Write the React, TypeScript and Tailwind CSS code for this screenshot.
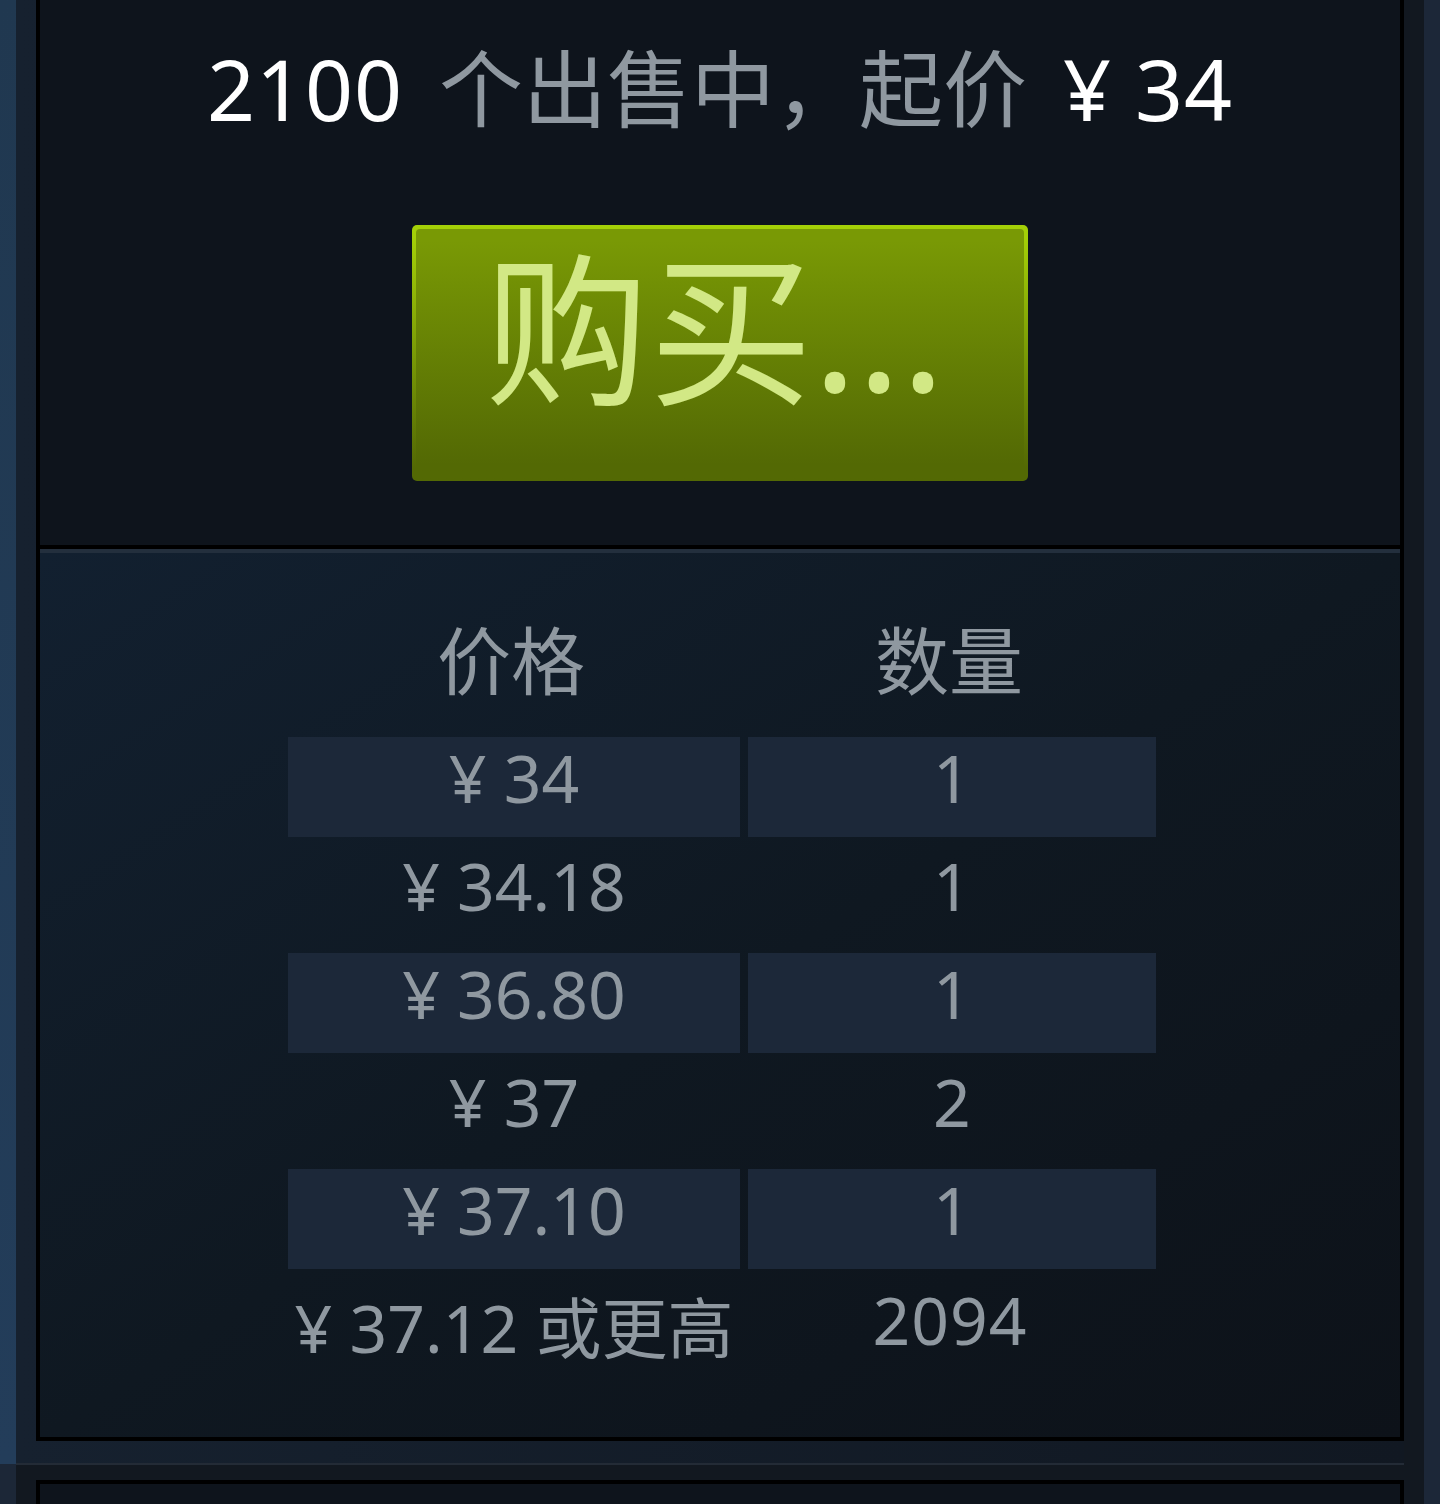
import React from 'react';

type Row = { price: string; qty: string };

const rows: Row[] = [
    { price: '¥ 34', qty: '1' },
    { price: '¥ 34.18', qty: '1' },
    { price: '¥ 36.80', qty: '1' },
    { price: '¥ 37', qty: '2' },
    { price: '¥ 37.10', qty: '1' },
];

const App: React.FC = () => {
    return (
        <div className="w-[1440px] h-[1504px] flex overflow-hidden bg-[#121820] font-['Noto_Sans','Noto_Sans_CJK_SC',sans-serif]">
            {/* left page strip */}
            <div className="w-[16px] flex flex-col">
                <div className="h-[1464px] bg-gradient-to-b from-[#203850] to-[#233d5a]" />
                <div className="flex-1 bg-[#1c2737]" />
            </div>

            {/* middle column */}
            <div className="w-[1388px] flex flex-col">
                <div className="h-[1463px] bg-gradient-to-r from-[#16212f] to-[#111822] pl-[20px]">
                    <div className="border-x-4 border-b-4 border-black">
                        {/* header promo */}
                        <div className="h-[545px] bg-[#0e141c] flex flex-col items-center pt-[47px]">
                            <div className="text-[84px] leading-none h-[84px] whitespace-nowrap flex">
                                <span className="text-white tracking-[1px]">2100</span>
                                <span className="text-[#8f98a0] ml-[36px]">个出售中，起价</span>
                                <span className="text-white ml-[36px] tracking-[1px]">¥ 34</span>
                            </div>
                            <button className="mt-[94px] w-[616px] h-[256px] p-[4px] rounded-[5px] bg-gradient-to-b from-[#a4d007] from-5% to-[#536904] to-95%">
                                <span className="w-full h-full flex justify-center items-start pt-[18px] pr-[10px] rounded-[4px] bg-gradient-to-b from-[#799905] from-5% to-[#536904] to-95% text-[#d2e885] text-[164px] leading-none">
                                    购买...
                                </span>
                            </button>
                        </div>
                        <div className="h-[4px] bg-black" />
                        <div className="h-[4px] bg-[#232f3d]" />

                        {/* order table */}
                        <div className="h-[884px] bg-gradient-to-br from-[#122030] via-[#0f1821] to-[#0d1219] pt-[63px]">
                            <table className="ml-[240px] border-separate border-spacing-[8px] text-[#8f98a0]">
                                <thead>
                                    <tr>
                                        <th className="w-[452px] font-normal text-[74px] leading-none pb-[31px] pt-0 pr-[6px] align-bottom">价格</th>
                                        <th className="w-[408px] font-normal text-[74px] leading-none pb-[31px] pt-0 pr-[6px] align-bottom">数量</th>
                                    </tr>
                                </thead>
                                <tbody>
                                    {rows.map((r, i) => (
                                        <tr key={i}>
                                            <td className={`h-[100px] text-center align-middle text-[66px] leading-none pb-[20px] whitespace-nowrap ${i % 2 === 0 ? 'bg-[#1c2839]' : ''}`}>
                                                {r.price}
                                            </td>
                                            <td className={`h-[100px] text-center align-middle text-[66px] leading-none pb-[20px] ${i % 2 === 0 ? 'bg-[#1c2839]' : ''}`}>
                                                {r.qty}
                                            </td>
                                        </tr>
                                    ))}
                                    <tr>
                                        <td className="h-[100px] text-center align-top text-[66px] leading-none pt-[17px] whitespace-nowrap">¥ 37.12 或更高</td>
                                        <td className="h-[100px] text-center align-top text-[66px] leading-none pt-[9px] pr-[4px] tracking-[1px]">2094</td>
                                    </tr>
                                </tbody>
                            </table>
                        </div>
                    </div>
                </div>
                <div className="h-[2px] bg-[#232b36]" />
                <div className="flex-1 bg-[#121820] pl-[20px] pt-[15px]">
                    <div className="h-full border-x-4 border-t-4 border-black bg-[#0e141c]" />
                </div>
            </div>

            {/* right page strip */}
            <div className="w-[20px] bg-[#121820]" />
            <div className="w-[16px] bg-[#1c2738]" />
        </div>
    );
};

export default App;
